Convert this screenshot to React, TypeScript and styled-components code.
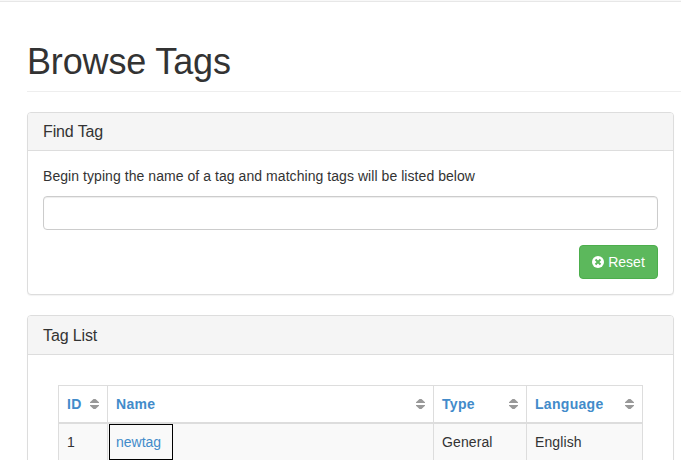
import React from "react";
import styled, { createGlobalStyle } from "styled-components";

const GlobalStyle = createGlobalStyle`
  *, *::before, *::after { box-sizing: border-box; }
  html, body { margin: 0; height: 460px; overflow: hidden; }
  body {
    background: #fff;
    color: #333;
    font: 14px/20px "Liberation Sans", Arial, sans-serif;
  }
`;

const Page = styled.div`
  height: 460px;
  overflow: hidden;
`;

const Navbar = styled.div`
  height: 2px;
  background: #f8f8f8;
  border-bottom: 1px solid #e7e7e7;
`;

const Content = styled.main`
  padding: 0 7px 0 27px;
`;

const PageHeader = styled.header`
  margin: 40px -7px 20px 0;
  padding-bottom: 9px;
  border-bottom: 1px solid #eee;
`;

const Title = styled.h1`
  margin: 0;
  font-size: 36px;
  font-weight: 400;
  line-height: 40px;
  letter-spacing: -0.15px;
`;

const Panel = styled.section`
  margin-bottom: 20px;
  border: 1px solid #ddd;
  border-radius: 4px;
  background: #fff;
  box-shadow: 0 1px 1px rgba(0, 0, 0, 0.05);
`;

const PanelHeading = styled.div<{ $height: number }>`
  display: flex;
  align-items: flex-end;
  height: ${(p) => p.$height}px;
  padding: 0 15px 9px;
  background: #f5f5f5;
  border-bottom: 1px solid #ddd;
  border-radius: 3px 3px 0 0;
`;

const PanelTitle = styled.h3`
  margin: 0;
  font-size: 16px;
  font-weight: 400;
  line-height: 18px;
  letter-spacing: -0.12px;
`;

const PanelBody = styled.div<{ $inset?: boolean }>`
  padding: ${(p) => (p.$inset ? "30px" : "15px")};
`;

const Label = styled.label`
  display: block;
  margin-bottom: 10px;
  letter-spacing: 0.058px;
`;

const TextInput = styled.input`
  display: block;
  width: 100%;
  height: 34px;
  padding: 6px 12px;
  border: 1px solid #ccc;
  border-radius: 4px;
  outline: 0;
  background: #fff;
  box-shadow: inset 0 1px 1px rgba(0, 0, 0, 0.075);
  color: #555;
  font: inherit;
`;

const Actions = styled.div`
  display: flex;
  justify-content: flex-end;
  margin-top: 15px;
`;

const ResetButton = styled.button`
  display: flex;
  align-items: center;
  justify-content: center;
  gap: 4px;
  width: 79px;
  height: 34px;
  padding: 0;
  border: 1px solid #4cae4c;
  border-radius: 4px;
  background: #5cb85c;
  color: #fff;
  font: inherit;
`;

const Table = styled.div`
  border: 1px solid #ddd;
  border-bottom: 0;
`;

const Row = styled.div<{ $head?: boolean }>`
  display: grid;
  grid-template-columns: 49px 326px 93px 1fr;
  height: ${(p) => (p.$head ? 38 : 37)}px;
  border-bottom: ${(p) => (p.$head ? 2 : 1)}px solid #ddd;
  background: ${(p) => (p.$head ? "#fff" : "#f9f9f9")};
`;

const Cell = styled.div`
  display: flex;
  align-items: center;
  min-width: 0;
  padding: 0 8px;
  border-right: 1px solid #ddd;
  letter-spacing: 0.1px;

  &:last-child { border-right: 0; }
`;

const HeadCell = styled(Cell)`
  justify-content: space-between;
  color: #428bca;
  font-weight: 700;
  letter-spacing: 0.3px;
`;

const LinkCell = styled(Cell)`
  padding: 0 1px;
  letter-spacing: 0;
`;

const TagLink = styled.a`
  display: flex;
  align-items: center;
  width: 64px;
  height: 36px;
  padding-left: 6px;
  border: 1px solid #000;
  color: #428bca;
  text-decoration: none;
`;

const Icon = styled.svg`
  display: block;
  flex: none;
`;

const SortIcon = () => (
  <Icon width="9" height="10" viewBox="0 0 9 10" fill="#999">
    <path d="M3.5 0h2L9 3.3V4H0v-.7zM0 6h9v.7L5.5 10h-2L0 6.7z" />
  </Icon>
);

const RemoveIcon = () => (
  <Icon width="12" height="12" viewBox="0 0 12 12">
    <circle cx="6" cy="6" r="6" fill="#fff" />
    <path d="M3.5 3.5 8.5 8.5M8.5 3.5 3.5 8.5" stroke="#5cb85c" strokeWidth="2" />
  </Icon>
);

const columns = ["ID", "Name", "Type", "Language"];

export default function App() {
  return (
    <Page>
      <GlobalStyle />
      <Navbar />
      <Content>
        <PageHeader>
          <Title>Browse Tags</Title>
        </PageHeader>
        <Panel>
          <PanelHeading $height={38}>
            <PanelTitle>Find Tag</PanelTitle>
          </PanelHeading>
          <PanelBody>
            <Label htmlFor="tag">Begin typing the name of a tag and matching tags will be listed below</Label>
            <TextInput id="tag" type="text" />
            <Actions>
              <ResetButton type="button">
                <RemoveIcon />
                Reset
              </ResetButton>
            </Actions>
          </PanelBody>
        </Panel>
        <Panel>
          <PanelHeading $height={39}>
            <PanelTitle>Tag List</PanelTitle>
          </PanelHeading>
          <PanelBody $inset>
            <Table>
              <Row $head>
                {columns.map((name) => (
                  <HeadCell key={name}>
                    {name}
                    <SortIcon />
                  </HeadCell>
                ))}
              </Row>
              <Row>
                <Cell>1</Cell>
                <LinkCell>
                  <TagLink href="#">newtag</TagLink>
                </LinkCell>
                <Cell>General</Cell>
                <Cell>English</Cell>
              </Row>
            </Table>
          </PanelBody>
        </Panel>
      </Content>
    </Page>
  );
}
